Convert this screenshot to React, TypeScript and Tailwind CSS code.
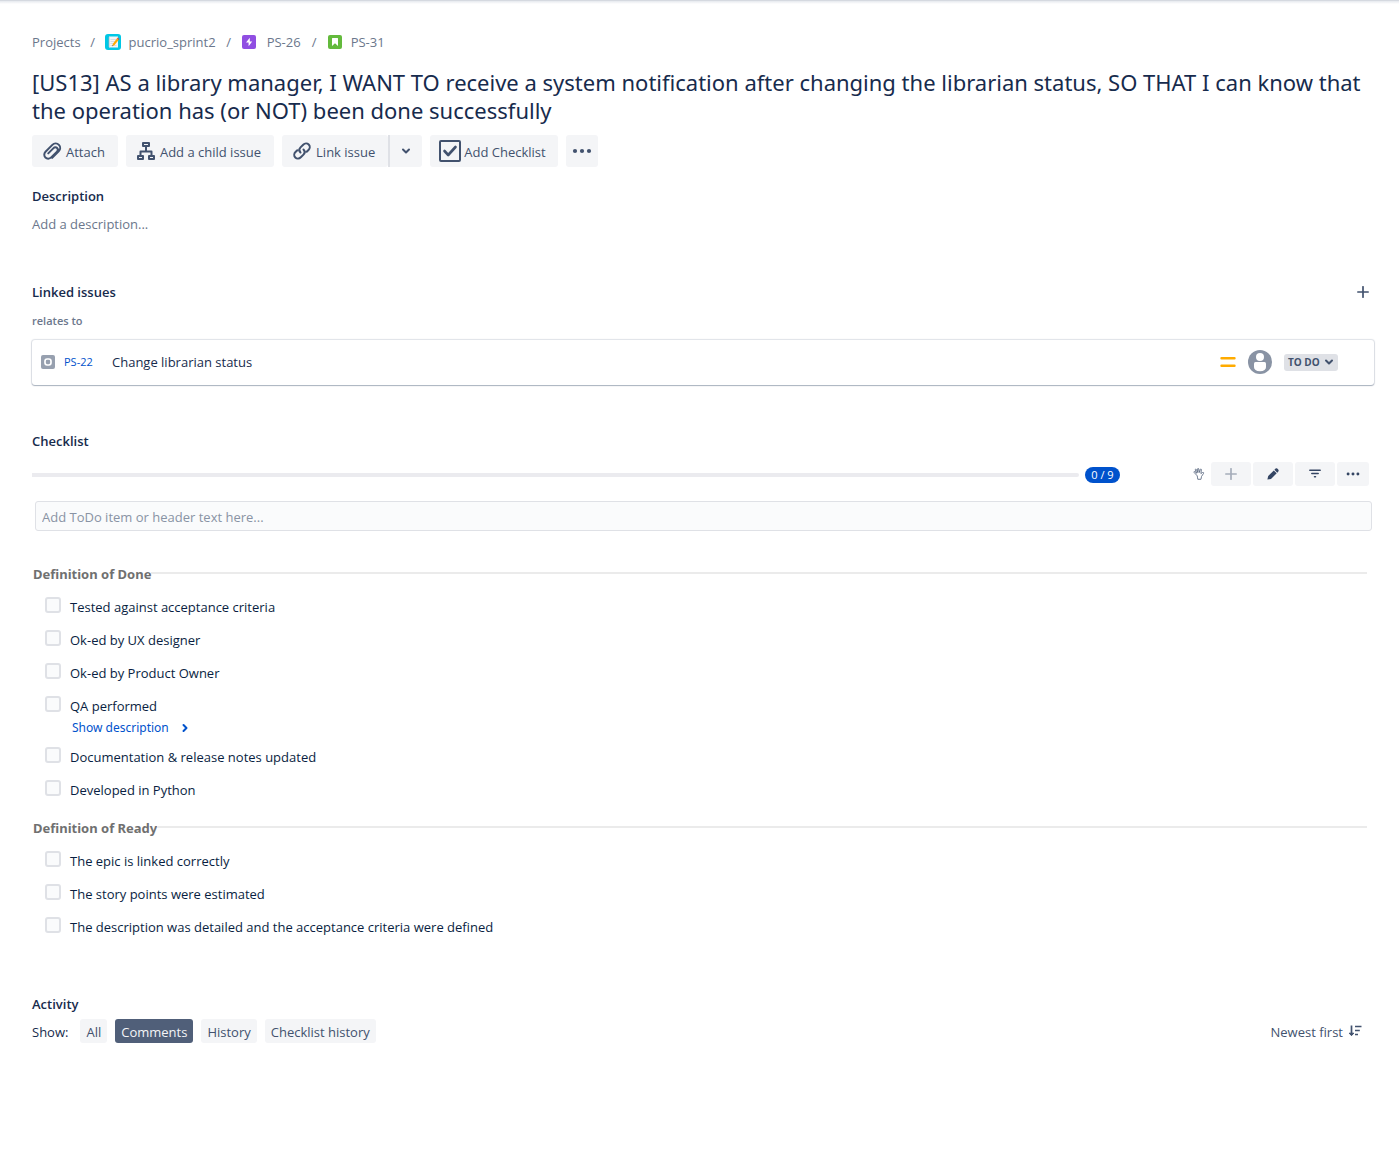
import { useState } from "react";
import type { ReactNode } from "react";

function AttachIcon() {
  return (
    <svg width="20" height="20" viewBox="0 0 24 24" fill="none" stroke="currentColor" strokeWidth="2.400" strokeLinecap="round" strokeLinejoin="round" aria-hidden="true">
      <path d="M12.200 20.300 20 12.500c2.200-2.200 2.400-5.700.3-7.900-2.200-2.200-5.700-2.100-7.900.1L4.200 12.900c-1.900 1.900-2 5-.1 6.900s5 1.800 6.900-.1l7-7c1.200-1.200 1.300-3.100.1-4.300s-3.100-1.100-4.300.1l-6.300 6.300" />
    </svg>
  );
}

function ChildIcon() {
  return (
    <svg width="20" height="20" viewBox="0 0 20 20" fill="none" stroke="currentColor" strokeWidth="2" strokeLinejoin="round" aria-hidden="true">
      <path d="M7 2h6v3H7zM2 15h5v3H2zM13 15h5v3h-5zM10 5v5.500M4.500 15v-4.500h11V15" />
    </svg>
  );
}

function LinkIcon() {
  return (
    <svg width="20" height="20" viewBox="0 0 20 20" fill="none" stroke="currentColor" strokeWidth="2" strokeLinecap="round" aria-hidden="true">
      <path d="M8.500 11.500c-1.600-1.600-1.500-3.600 0-5.100l2.700-2.700c1.600-1.600 4-1.700 5.500-.2s1.400 3.900-.2 5.500L14.700 10.800M11.500 8.500c1.600 1.600 1.500 3.600 0 5.100l-2.700 2.700c-1.600 1.600-4 1.700-5.500.2s-1.400-3.900.2-5.500L5.300 9.200" />
    </svg>
  );
}

function ChecklistIcon() {
  return (
    <svg width="22" height="22" viewBox="0 0 22 22" fill="none" stroke="currentColor" aria-hidden="true">
      <rect x="1" y="1" width="20" height="20" rx="1" strokeWidth="2" />
      <path d="m5.500 11 3.700 4 7.300-8" strokeWidth="2.600" strokeLinecap="round" strokeLinejoin="round" />
    </svg>
  );
}

function Chevron({ right = false }: { right?: boolean }) {
  return (
    <svg width="10" height="10" viewBox="0 0 10 10" fill="none" stroke="currentColor" strokeWidth="2" strokeLinecap="round" strokeLinejoin="round" aria-hidden="true">
      <path d={right ? "m3.500 2 3 3-3 3" : "m2 3.500 3 3 3-3"} />
    </svg>
  );
}

function Dots({ size }: { size: number }) {
  return (
    <svg width={size} height="6" viewBox="0 0 20 6" fill="currentColor" aria-hidden="true">
      <circle cx="3" cy="3" r="2.100" />
      <circle cx="10" cy="3" r="2.100" />
      <circle cx="17" cy="3" r="2.100" />
    </svg>
  );
}

function Plus({ size }: { size: number }) {
  return (
    <svg width={size} height={size} viewBox="0 0 12 12" stroke="currentColor" strokeWidth="1.700" strokeLinecap="round" aria-hidden="true">
      <path d="M6 .8v10.400M.8 6h10.400" />
    </svg>
  );
}

function ProjectIcon() {
  return (
    <svg width="16" height="16" viewBox="0 0 16 16" aria-hidden="true">
      <rect width="16" height="16" rx="3" fill="#00c7e5" />
      <path d="M4 2.500h9v11H4z" fill="#f4f5f7" />
      <path d="M5.500 5.500h6M5.500 7.500h5M5.500 9.500h3M5.500 11.500h6" stroke="#c5d3dc" strokeWidth=".7" />
      <path d="M3 4h2M3 6h2M3 8h2M3 10h2M3 12h2" stroke="#a5b3bc" strokeWidth=".7" />
      <path d="m7.300 12.200.6-2.400 4-5.200 1.700 1.300-4 5.200z" fill="#ffab00" />
      <path d="m11.900 4.600.8-1 1.700 1.300-.8 1z" fill="#e5493a" />
      <path d="m7.300 12.200.3-1.100.7.600z" fill="#42526e" />
    </svg>
  );
}

function EpicIcon() {
  return (
    <svg width="14" height="14" viewBox="0 0 14 14" aria-hidden="true">
      <rect width="14" height="14" rx="2" fill="#904ee2" />
      <path d="M7.800 2.800 4 7.500h2.600v3.700L10.200 6.500H7.800z" fill="#fff" />
    </svg>
  );
}

function StoryIcon() {
  return (
    <svg width="14" height="14" viewBox="0 0 14 14" aria-hidden="true">
      <rect width="14" height="14" rx="2" fill="#63ba3c" />
      <path d="M4 3.500a.5.500 0 0 1 .5-.5h5a.5.500 0 0 1 .5.500V11L7 8.300 4 11z" fill="#fff" />
    </svg>
  );
}

function HandIcon() {
  return (
    <svg width="12" height="12" viewBox="0 0 12 12" fill="none" stroke="#505f79" strokeWidth=".8" strokeLinecap="round" strokeLinejoin="round" aria-hidden="true">
      <path d="M4 7.600 1 4.300c-.3-.7.500-1.100 1-.6l1.700 1.500L2.300 1.800c-.1-.8.800-1 1.100-.3L4.800 4.600 4.600.9c.1-.7 1-.7 1.100 0l.6 3.600L7.300 1.300c.3-.6 1.100-.4 1.100.3L7.900 5.600l1.600-1.100c.8-.3 1.500.2 1.100.8L8.500 8.500 8 11.300H4.800L4.500 9.500z" />
    </svg>
  );
}

function PencilIcon() {
  return (
    <svg width="12" height="12" viewBox="0 0 12 12" fill="currentColor" aria-hidden="true">
      <path d="M.4 11.600 1.200 8l5.600-5.600 2.900 2.900L4 10.900zM7.400 1.800l1-1c.7-.7 1.500-.6 2.200 0l.6.7c.7.700.6 1.500 0 2.200l-.9 1z" />
    </svg>
  );
}

function FilterIcon() {
  return (
    <svg width="12" height="10" viewBox="0 0 12 10" stroke="currentColor" strokeWidth="1.500" strokeLinecap="round" aria-hidden="true">
      <path d="M.8 1.200h10.400M2.800 4.500h6.400M5.500 7.800h1" />
    </svg>
  );
}

function SortIcon() {
  return (
    <svg width="14" height="12" viewBox="0 0 14 12" fill="none" stroke="currentColor" strokeWidth="1.700" strokeLinejoin="round" aria-hidden="true">
      <path d="M3.500.5v9M7 1.500h6.500M7 5.500h4.800M7 9.500h3" />
      <path d="M1.200 8.200h4.600L3.500 10.700z" fill="currentColor" strokeWidth="1" />
    </svg>
  );
}

function ActionButton({ icon, children }: { icon: ReactNode; children: ReactNode }) {
  return (
    <button className="flex h-8 items-center gap-1 rounded-[3px] bg-[#f4f5f7] pr-[13px] pl-2.5 text-[#42526e]">
      {icon}
      <span className="pt-0.5">{children}</span>
    </button>
  );
}

function ToolButton({ label, className, children }: { label: string; className: string; children: ReactNode }) {
  return (
    <button aria-label={label} className={`flex h-6 items-center justify-center rounded-[3px] bg-[#f4f5f7] ${className}`}>
      {children}
    </button>
  );
}

type Item = { text: string; hasDescription?: boolean };

const done: Item[] = [
  { text: "Tested against acceptance criteria" },
  { text: "Ok-ed by UX designer" },
  { text: "Ok-ed by Product Owner" },
  { text: "QA performed", hasDescription: true },
  { text: "Documentation & release notes updated" },
  { text: "Developed in Python" },
];

const ready: Item[] = [
  { text: "The epic is linked correctly" },
  { text: "The story points were estimated" },
  { text: "The description was detailed and the acceptance criteria were defined" },
];

function ChecklistGroup({ title, items }: { title: string; items: Item[] }) {
  return (
    <div>
      <div className="flex items-center pr-[7px] pl-px">
        <h3 className="font-['Noto_Sans','Open_Sans',sans-serif] text-[13px] leading-5 font-bold text-[#707070]">{title}</h3>
        <div className="mb-0.5 h-0.5 flex-1 bg-[#ebebeb]" />
      </div>
      <ul className="mt-[13px] flex flex-col gap-[13px] pl-[13px]">
        {items.map((item) => (
          <li key={item.text}>
            <label className="flex items-start gap-[9px] text-[#091e42]">
              <input
                type="checkbox"
                className="size-4 shrink-0 appearance-none rounded-[3px] border-2 border-[#dfe1e6] bg-[#fafbfc] checked:bg-[#0052cc]"
              />
              <span>{item.text}</span>
            </label>
            {item.hasDescription && (
              <button className="-mb-1.5 ml-[27px] flex items-center gap-[11px] font-['Noto_Sans','Open_Sans',sans-serif] text-xs leading-6 text-[#0052cc]">
                Show description
                <Chevron right />
              </button>
            )}
          </li>
        ))}
      </ul>
    </div>
  );
}

const filters = ["All", "Comments", "History", "Checklist history"];

export default function App() {
  const [active, setActive] = useState("Comments");
  return (
    <div className="min-h-screen bg-white font-['Open_Sans','Noto_Sans',sans-serif] text-[13px] leading-5 text-[#172b4d]">
      <div className="h-1 border-t border-[#d5d9e0] bg-linear-to-b from-[#e6e9ee] to-white" />
      <main className="pt-7 pr-[25px] pb-30 pl-8">
        <nav aria-label="Breadcrumb">
          <ol className="flex items-center text-[#6b778c]">
            <li><a href="#projects">Projects</a></li>
            <li aria-hidden="true" className="w-6 text-center">/</li>
            <li>
              <a href="#project" className="flex items-center gap-2"><ProjectIcon />pucrio_sprint2</a>
            </li>
            <li aria-hidden="true" className="w-[26px] text-center">/</li>
            <li>
              <a href="#epic" className="flex items-center gap-[11px]"><EpicIcon />PS-26</a>
            </li>
            <li aria-hidden="true" className="w-[27px] text-center">/</li>
            <li>
              <a href="#story" className="flex items-center gap-[9px]"><StoryIcon />PS-31</a>
            </li>
          </ol>
        </nav>

        <h1 className="mt-4 font-['Noto_Sans','Open_Sans',sans-serif] text-[22px] leading-7">
          [US13] AS a library manager, I WANT TO receive a system notification after changing the librarian status, SO THAT I can know that the operation has (or NOT) been done successfully
        </h1>

        <div className="mt-[11px] flex gap-2">
          <ActionButton icon={<AttachIcon />}>Attach</ActionButton>
          <ActionButton icon={<ChildIcon />}>Add a child issue</ActionButton>
          <div className="flex">
            <ActionButton icon={<LinkIcon />}>Link issue</ActionButton>
            <button aria-label="More link options" className="flex h-8 w-[34px] items-center justify-center rounded-r-[3px] border-l-2 border-[#dfe1e6] bg-[#f4f5f7] text-[#42526e]">
              <Chevron />
            </button>
          </div>
          <button className="flex h-8 items-center gap-[3px] rounded-[3px] bg-[#f4f5f7] pr-3 pl-[9px] text-[#42526e]">
            <ChecklistIcon />
            <span className="pt-0.5">Add Checklist</span>
          </button>
          <button aria-label="More actions" className="flex size-8 items-center justify-center rounded-[3px] bg-[#f4f5f7] text-[#42526e]">
            <Dots size={20} />
          </button>
        </div>

        <section className="mt-[19px]">
          <h2 className="font-semibold">Description</h2>
          <p className="mt-2 text-[#6b778c]">Add a description...</p>
        </section>

        <section className="mt-12">
          <div className="flex items-center justify-between pr-[5px]">
            <h2 className="font-semibold">Linked issues</h2>
            <button aria-label="Link an issue" className="text-[#42526e]"><Plus size={12} /></button>
          </div>
          <h3 className="mt-[11px] text-[11px] leading-4 font-semibold text-[#6b778c]">relates to</h3>
          <div className="mt-[11px] flex h-[45px] items-center rounded-[3px] bg-white pr-9 pb-px pl-[9px] shadow-[0_1px_1px_rgba(9,30,66,0.25),0_0_1px_1px_rgba(9,30,66,0.13)]">
            <svg width="14" height="14" viewBox="0 0 14 14" aria-hidden="true">
              <rect width="14" height="14" rx="2" fill="#97a0af" />
              <rect x="4" y="4" width="6" height="6" rx="2.200" fill="none" stroke="#fff" strokeWidth="1.700" />
            </svg>
            <a href="#ps-22" className="ml-[9px] w-12 text-[11px] text-[#0052cc]">PS-22</a>
            <a href="#ps-22" className="flex-1">Change librarian status</a>
            <svg width="16" height="12" viewBox="0 0 16 12" stroke="#ffab00" strokeWidth="2.400" strokeLinecap="round" role="img" aria-label="Medium priority">
              <path d="M1.500 2.200h13M1.500 9.800h13" />
            </svg>
            <svg className="ml-3" width="24" height="24" viewBox="0 0 24 24" role="img" aria-label="Unassigned">
              <circle cx="12" cy="12" r="12" fill="#8993a4" />
              <circle cx="12" cy="7" r="4" fill="#fff" />
              <path d="M6 13.500a1.500 1.500 0 0 1 1.500-1.500h9a1.500 1.500 0 0 1 1.500 1.500V17c0 2.500-2 4.200-6 4.200S6 19.500 6 17z" fill="#fff" />
            </svg>
            <button className="ml-3 flex h-[17px] w-[54px] items-center justify-between rounded-[3px] bg-[#dfe1e6] px-1 text-[10px] font-bold text-[#42526e]">
              TO DO
              <Chevron />
            </button>
          </div>
        </section>

        <section className="mt-[46px]">
          <h2 className="font-semibold">Checklist</h2>
          <div className="mt-[11px] flex items-center pr-[5px] text-[#344563]">
            <div role="progressbar" aria-label="Checklist progress" aria-valuenow={0} aria-valuemin={0} aria-valuemax={9} className="mt-0.5 h-1 flex-1 rounded-r-sm bg-[#ebebef]" />
            <span className="mt-0.5 ml-1.5 flex h-4 w-[35px] items-center justify-center rounded-full bg-[#0052cc] text-[11px] text-white">0 / 9</span>
            <span className="mr-1.5 ml-[73px]"><HandIcon /></span>
            <div className="flex gap-0.5">
              <ToolButton label="Add item" className="w-10 text-[#a5adba]"><Plus size={12} /></ToolButton>
              <ToolButton label="Edit items" className="w-10"><PencilIcon /></ToolButton>
              <ToolButton label="Filter items" className="w-10"><FilterIcon /></ToolButton>
              <ToolButton label="More checklist actions" className="w-8"><Dots size={14} /></ToolButton>
            </div>
          </div>
          <div className="mt-[15px] pr-0.5 pl-[3px]">
            <input
              type="text"
              aria-label="New checklist item"
              placeholder="Add ToDo item or header text here..."
              className="block h-[30px] w-full rounded-[3px] border border-[#dfe1e6] bg-[#fafbfc] px-1.5 pt-0.5 placeholder:text-[#8993a4]"
            />
          </div>
          <div className="mt-[33px] flex flex-col gap-[18px]">
            <ChecklistGroup title="Definition of Done" items={done} />
            <ChecklistGroup title="Definition of Ready" items={ready} />
          </div>
        </section>

        <section className="mt-[57px]">
          <h2 className="font-semibold">Activity</h2>
          <div className="mt-[5px] flex items-center">
            <span className="mr-3 pt-0.5">Show:</span>
            <div className="flex gap-2">
              {filters.map((name) => (
                <button
                  key={name}
                  aria-pressed={active === name}
                  onClick={() => setActive(name)}
                  className={`h-6 rounded-[3px] px-1.5 pt-0.5 ${active === name ? "bg-[#505f79] text-[#f4f5f7]" : "bg-[#f4f5f7] text-[#42526e]"}`}
                >
                  {name}
                </button>
              ))}
            </div>
            <button className="mr-3 ml-auto flex items-center gap-[5px] text-[#42526e]">
              <span className="pt-0.5">Newest first</span>
              <SortIcon />
            </button>
          </div>
        </section>
      </main>
    </div>
  );
}
